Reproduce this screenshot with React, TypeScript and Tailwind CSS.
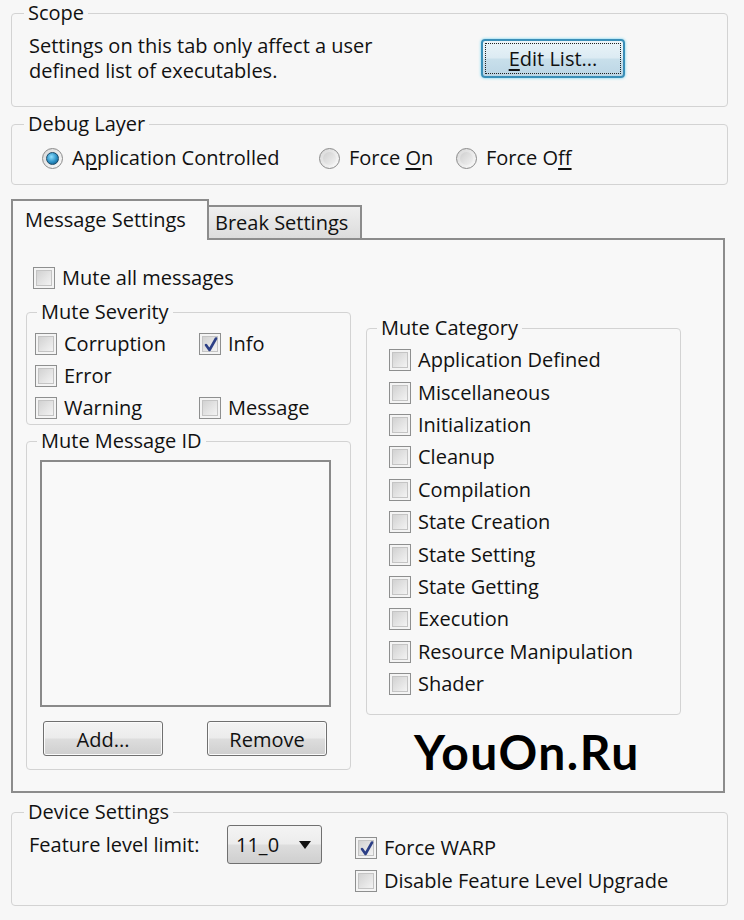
import React from "react";

function Check({ checked }: { checked?: boolean }) {
  return (
    <span className="relative flex h-[22px] w-[22px] shrink-0 items-center justify-center border border-[#8e8f8f] bg-[#f4f4f4] p-[2px]">
      <span className="h-full w-full border border-[#c4c4c4] bg-gradient-to-br from-[#d2d2d2] to-[#f3f3f3]" />
      {checked && (
        <svg className="absolute left-[3px] top-[2px]" width="16" height="17" viewBox="0 0 16 17">
          <path d="M3 9 L6.5 14 L13 2.5" fill="none" stroke="#2c3f86" strokeWidth="2.6" strokeLinejoin="round" strokeLinecap="round" />
        </svg>
      )}
    </span>
  );
}

function Radio({ on }: { on?: boolean }) {
  return (
    <span className="flex h-[21px] w-[21px] shrink-0 items-center justify-center rounded-full border border-[#8b8b8b] bg-gradient-to-br from-[#d8d8d8] to-[#fbfbfb]">
      {on ? (
        <span className="h-[13px] w-[13px] rounded-full border border-[#1b4a68] bg-[radial-gradient(circle_at_40%_35%,#8fe0ff,#2a8fc4_55%,#0f4d75)]" />
      ) : (
        <span className="h-[13px] w-[13px] rounded-full bg-gradient-to-br from-[#cfcfcf] to-[#f2f2f2]" />
      )}
    </span>
  );
}

function CheckRow({ label, checked, h = "h-[32px]" }: { label: string; checked?: boolean; h?: string }) {
  return (
    <div className={`flex items-center gap-[7px] ${h}`}>
      <Check checked={checked} />
      <span className="whitespace-nowrap">{label}</span>
    </div>
  );
}

function Btn({ children, w }: { children: React.ReactNode; w: string }) {
  return (
    <div className={`flex h-[35px] ${w} items-center justify-center rounded-[3px] border border-[#707070] bg-[linear-gradient(#f4f4f4_0%,#ececec_48%,#dddddd_52%,#cfcfcf_100%)] pt-[2px] shadow-[inset_0_0_0_1px_#fbfbfb]`}>
      {children}
    </div>
  );
}

const categories = [
  "Application Defined",
  "Miscellaneous",
  "Initialization",
  "Cleanup",
  "Compilation",
  "State Creation",
  "State Setting",
  "State Getting",
  "Execution",
  "Resource Manipulation",
  "Shader",
];

export default function App() {
  return (
    <div className="h-[920px] w-[744px] overflow-hidden bg-[#f7f7f7] pl-[11px] pr-[16px] pt-[2px] font-['Open_Sans','Noto_Sans',sans-serif] text-[20px] tracking-[0px] text-[#111]">
      {/* Scope */}
      <fieldset className="h-[105px] rounded-[4px] border border-[#d3d3d3]">
        <legend className="ml-[12px] px-[4px] leading-[22px]">Scope</legend>
        <div className="flex items-start">
          <div className="pl-[17px] pt-[9px] leading-[25px]">
            <div>Settings on this tab only affect a user</div>
            <div>defined list of executables.</div>
          </div>
          <div className="ml-auto mr-[102px] mt-[15px] flex h-[39px] w-[144px] shrink-0 items-center justify-center rounded-[4px] border-2 border-[#3a8fb8] bg-[linear-gradient(#eaf4f9_0%,#dcebf3_48%,#c8dfeb_52%,#bcd6e5_100%)] p-[2px] shadow-[0_0_3px_#5fd0f0]">
            <div className="flex h-full w-full items-center justify-center border border-dotted border-[#222]">
              <span>
                <span className="underline underline-offset-[3px]">E</span>dit List...
              </span>
            </div>
          </div>
        </div>
      </fieldset>

      {/* Debug Layer */}
      <fieldset className="mt-[6px] h-[72px] rounded-[4px] border border-[#d3d3d3]">
        <legend className="ml-[12px] px-[4px] leading-[22px]">Debug Layer</legend>
        <div className="flex h-[24px] items-center pl-[30px] mt-[11px]">
          <div className="flex w-[277px] items-center gap-[9px]">
            <Radio on />
            <span>
              A<span className="underline underline-offset-[3px]">p</span>plication Controlled
            </span>
          </div>
          <div className="flex w-[137px] items-center gap-[9px]">
            <Radio />
            <span>
              Force <span className="underline underline-offset-[3px]">O</span>n
            </span>
          </div>
          <div className="flex items-center gap-[9px]">
            <Radio />
            <span>
              Force O<span className="underline underline-offset-[3px]">f</span>f
            </span>
          </div>
        </div>
      </fieldset>

      {/* Tabs */}
      <div className="mt-[14px] mr-[3px]">
        <div className="relative z-10 -mb-[2px] flex items-end">
          <div className="flex h-[41px] w-[198px] items-start border-2 border-b-0 border-[#8c8c8c] bg-[#f8f8f8] pl-[12px] pt-[4px]">
            <span>Message Settings</span>
          </div>
          <div className="mb-[2px] flex h-[33px] w-[153px] items-center border-2 border-b-0 border-l-0 border-[#8c8c8c] bg-[linear-gradient(#efefef,#dcdcdc)] pl-[6px]">
            <span>Break Settings</span>
          </div>
        </div>
        <div className="h-[555px] border-2 border-[#8c8c8c] bg-[#f8f8f8]">
          <div className="pl-[20px] pt-[27px]">
            <CheckRow label="Mute all messages" h="h-[22px]" />
          </div>
          <div className="flex">
            {/* Left column */}
            <div className="ml-[13px] w-[325px]">
              <fieldset className="mt-[12px] h-[124px] rounded-[4px] border border-[#d3d3d3]">
                <legend className="ml-[10px] px-[4px] leading-[22px]">Mute Severity</legend>
                <div className="grid grid-cols-[164px_1fr] pl-[8px] pt-[5px]">
                  <CheckRow label="Corruption" />
                  <CheckRow label="Info" checked />
                  <CheckRow label="Error" />
                  <div />
                  <CheckRow label="Warning" />
                  <CheckRow label="Message" />
                </div>
              </fieldset>
              <fieldset className="mt-[5px] h-[340px] rounded-[4px] border border-[#d3d3d3]">
                <legend className="ml-[10px] px-[4px] leading-[22px]">Mute Message ID</legend>
                <div className="pl-[13px] pt-[8px]">
                  <div className="h-[247px] w-[291px] border-2 border-[#8a8a8a] bg-[#f9f9f9]" />
                  <div className="mt-[14px] flex pl-[3px]">
                    <Btn w="w-[120px]">Add...</Btn>
                    <div className="ml-[44px]">
                      <Btn w="w-[120px]">Remove</Btn>
                    </div>
                  </div>
                </div>
              </fieldset>
            </div>
            {/* Right column */}
            <div className="ml-[15px] w-[315px]">
              <fieldset className="mt-[28px] h-[398px] rounded-[4px] border border-[#d3d3d3]">
                <legend className="ml-[10px] px-[4px] leading-[22px]">Mute Category</legend>
                <div className="pl-[22px] pt-[5px]">
                  {categories.map((c) => (
                    <CheckRow key={c} label={c} h="h-[32.4px]" />
                  ))}
                </div>
              </fieldset>
              <div className="mt-[9px] pl-[48px] font-['Lato',sans-serif] text-[48px] font-bold leading-[56px] tracking-[1.5px] text-black">
                YouOn.Ru
              </div>
            </div>
          </div>
        </div>
      </div>

      {/* Device Settings */}
      <fieldset className="mt-[8px] h-[105px] rounded-[4px] border border-[#d3d3d3]">
        <legend className="ml-[12px] px-[4px] leading-[22px]">Device Settings</legend>
        <div className="flex items-start">
          <div className="flex h-[43px] w-[215px] shrink-0 items-center whitespace-nowrap pl-[17px]">Feature level limit:</div>
          <div className="mt-[2px] flex h-[39px] w-[95px] shrink-0 items-center justify-between rounded-[3px] border border-[#707070] bg-[linear-gradient(#f4f4f4_0%,#ececec_48%,#dddddd_52%,#cfcfcf_100%)] pl-[8px] pr-[10px]">
            <span>11_0</span>
            <svg width="12" height="8" viewBox="0 0 12 8">
              <path d="M0 0 H12 L6 8 Z" fill="#111" />
            </svg>
          </div>
          <div className="ml-[33px] mt-[8px]">
            <CheckRow label="Force WARP" checked h="h-[33px]" />
            <CheckRow label="Disable Feature Level Upgrade" h="h-[33px]" />
          </div>
        </div>
      </fieldset>
    </div>
  );
}
